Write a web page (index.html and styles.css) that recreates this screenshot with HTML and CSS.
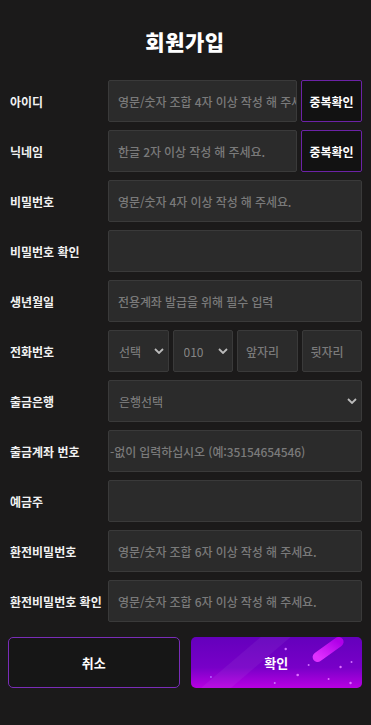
FILE: index.html
```html
<!DOCTYPE html>
<html lang="ko">
  <head>
    <meta charset="UTF-8" />
    <meta name="viewport" content="width=device-width, initial-scale=1.0" />
    <title>회원가입</title>
    <link rel="stylesheet" href="styles.css">
  </head>
  <body>
    <div class="page">
      <h1 class="title">회원가입</h1>

      <form class="form">
        <div class="row">
          <label class="label">아이디</label>
          <div class="field">
            <input class="input" type="text" placeholder="영문/숫자 조합 4자 이상 작성 해 주세요." />
            <button type="button" class="check-btn">중복확인</button>
          </div>
        </div>
        <div class="row">
          <label class="label">닉네임</label>
          <div class="field">
            <input class="input" type="text" placeholder="한글 2자 이상 작성 해 주세요." />
            <button type="button" class="check-btn">중복확인</button>
          </div>
        </div>
        <div class="row">
          <label class="label">비밀번호</label>
          <div class="field">
            <input class="input" type="password" placeholder="영문/숫자 4자 이상 작성 해 주세요." />
          </div>
        </div>
        <div class="row">
          <label class="label">비밀번호 확인</label>
          <div class="field">
            <input class="input" type="password" />
          </div>
        </div>
        <div class="row">
          <label class="label">생년월일</label>
          <div class="field">
            <input class="input" type="text" placeholder="전용계좌 발급을 위해 필수 입력" />
          </div>
        </div>
        <div class="row">
          <label class="label">전화번호</label>
          <div class="field phone">
            <div class="select-wrap">
              <select class="select"><option>선택</option></select>
              <svg class="chevron" width="10" height="6" viewBox="0 0 10 6"><path d="M1 1l4 4 4-4" fill="none" stroke="#bbb" stroke-width="1.8"/></svg>
            </div>
            <div class="select-wrap">
              <select class="select"><option>010</option></select>
              <svg class="chevron" width="10" height="6" viewBox="0 0 10 6"><path d="M1 1l4 4 4-4" fill="none" stroke="#bbb" stroke-width="1.8"/></svg>
            </div>
            <input class="input small" type="text" placeholder="앞자리" />
            <input class="input small" type="text" placeholder="뒷자리" />
          </div>
        </div>
        <div class="row">
          <label class="label">출금은행</label>
          <div class="field">
            <div class="select-wrap">
              <select class="select"><option>은행선택</option></select>
              <svg class="chevron" width="10" height="6" viewBox="0 0 10 6"><path d="M1 1l4 4 4-4" fill="none" stroke="#bbb" stroke-width="1.8"/></svg>
            </div>
          </div>
        </div>
        <div class="row">
          <label class="label">출금계좌 번호</label>
          <div class="field">
            <input class="input tight" type="text" placeholder="-없이 입력하십시오 (예:35154654546)" />
          </div>
        </div>
        <div class="row">
          <label class="label">예금주</label>
          <div class="field">
            <input class="input" type="text" />
          </div>
        </div>
        <div class="row">
          <label class="label">환전비밀번호</label>
          <div class="field">
            <input class="input" type="password" placeholder="영문/숫자 조합 6자 이상 작성 해 주세요." />
          </div>
        </div>
        <div class="row">
          <label class="label">환전비밀번호 확인</label>
          <div class="field">
            <input class="input" type="password" placeholder="영문/숫자 조합 6자 이상 작성 해 주세요." />
          </div>
        </div>

        <div class="actions">
          <button type="button" class="btn cancel">취소</button>
          <button type="button" class="btn confirm">
            <svg class="sparkle" width="172" height="51" viewBox="0 0 172 51" preserveAspectRatio="none">
              <defs>
                <linearGradient id="streak" x1="0" y1="1" x2="1" y2="0">
                  <stop offset="0" stop-color="#e030ff"/>
                  <stop offset="1" stop-color="#b000e8"/>
                </linearGradient>
              </defs>
              <path d="M10 51 L70 0 L100 0 L40 51 Z" fill="#ffffff" opacity="0.05"/>
              <path d="M127 20 L148 5" stroke="url(#streak)" stroke-width="10" stroke-linecap="round"/>
              <circle cx="95" cy="12" r="1.2" fill="#d070ff"/>
              <circle cx="107" cy="38" r="1.3" fill="#e070ff"/>
              <circle cx="118" cy="28" r="1" fill="#d070ff"/>
              <circle cx="150" cy="30" r="1.2" fill="#e070ff"/>
              <circle cx="161" cy="25" r="1" fill="#d070ff"/>
              <circle cx="138" cy="42" r="1" fill="#e070ff"/>
              <circle cx="160" cy="46" r="1.2" fill="#e070ff"/>
              <circle cx="84" cy="46" r="1" fill="#d070ff"/>
              <circle cx="20" cy="40" r="1" fill="#b060ff"/>
            </svg>
            <span class="btn-text">확인</span>
          </button>
        </div>
      </form>
    </div>
  </body>
</html>
```

FILE: styles.css
```css
* {
  box-sizing: border-box;
}
body {
  margin: 0;
  background-color: #1b1a1a;
  font-family: "Noto Sans CJK KR", "Noto Sans", sans-serif;
  color: #fff;
}
.page {
  padding: 0 9px 0 8px;
}
.title {
  margin: 0;
  padding-top: 27px;
  height: 80px;
  text-align: center;
  font-size: 21px;
  font-weight: 900;
  line-height: 28px;
  letter-spacing: 0.5px;
}
.form {
  display: flex;
  flex-direction: column;
  gap: 8px;
}
.row {
  display: flex;
  align-items: center;
  height: 42px;
}
.label {
  width: 100px;
  flex-shrink: 0;
  padding-left: 2px;
  font-size: 12px;
  font-weight: 700;
  color: #f2f2f2;
}
.field {
  flex: 1;
  display: grid;
  grid-template-columns: minmax(0, 1fr);
  grid-auto-flow: column;
  grid-auto-columns: 61px;
  gap: 4px;
  height: 100%;
  min-width: 0;
}
.field.phone {
  grid-template-columns: repeat(4, minmax(0, 1fr));
}
.input,
.select {
  width: 100%;
  min-width: 0;
  height: 100%;
  background-color: #2b2b2b;
  border: 1px solid #3a3a3a;
  border-radius: 2px;
  color: #ddd;
  font-family: inherit;
  font-size: 12px;
  padding: 0 0 0 9px;
  outline: none;
}
.input::placeholder {
  color: #7a7a7a;
  font-weight: 500;
  letter-spacing: -0.1px;
}
.input.tight {
  padding-left: 1px;
}
.input.small {
  padding: 0 8px;
}
.check-btn {
  height: 100%;
  background-color: #121212;
  border: 1px solid #6c22a6;
  border-radius: 2px;
  color: #fff;
  font-family: inherit;
  font-size: 12px;
  font-weight: 700;
  padding: 0;
}
.select-wrap {
  position: relative;
  min-width: 0;
  height: 100%;
}
.select {
  appearance: none;
  -webkit-appearance: none;
  color: #858585;
  padding: 0 10px;
}
.chevron {
  position: absolute;
  right: 5px;
  top: 18px;
  pointer-events: none;
}
.actions {
  display: grid;
  grid-template-columns: 1fr 1fr;
  gap: 11px;
  margin-top: 7px;
  height: 51px;
}
.btn {
  height: 100%;
  border-radius: 5px;
  font-family: inherit;
  font-size: 13px;
  font-weight: 700;
  color: #fff;
  padding: 0;
}
.cancel {
  background-color: #161616;
  border: 1px solid #7a2db8;
}
.confirm {
  position: relative;
  overflow: hidden;
  border: none;
  background: linear-gradient(to bottom, #6400bc 0%, #7800c8 60%, #b800e2 100%);
}
.sparkle {
  position: absolute;
  left: 0;
  top: 0;
  width: 100%;
  height: 100%;
}
.btn-text {
  position: relative;
}
```
